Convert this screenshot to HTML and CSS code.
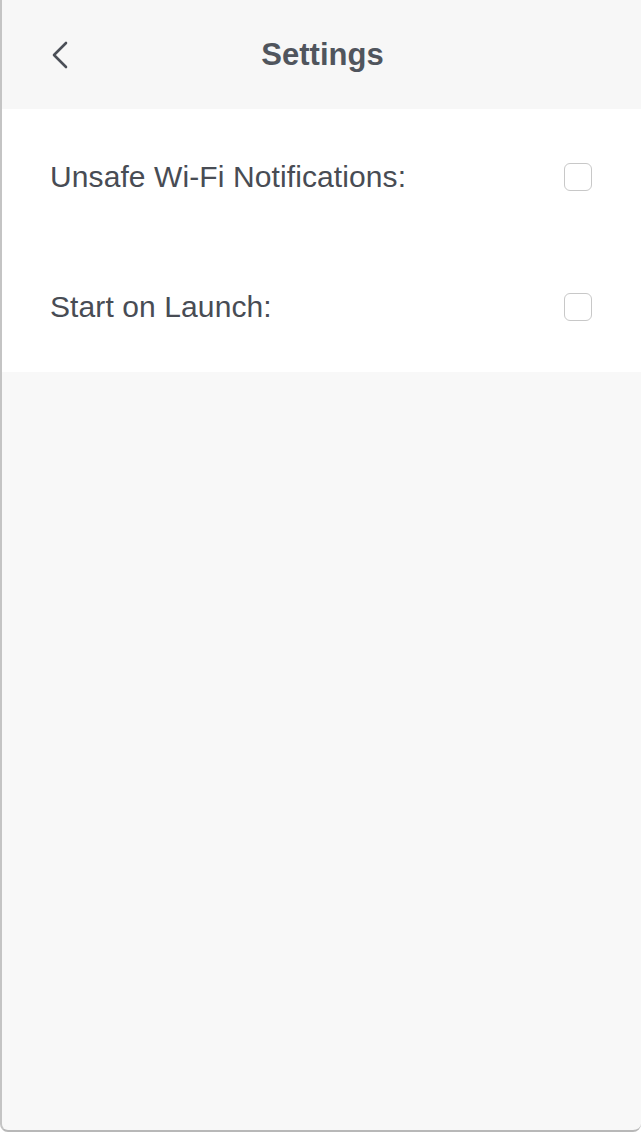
FILE: index.html
```html
<!DOCTYPE html>
<html lang="en">
<head>
    <meta charset="UTF-8">
    <title>Settings</title>
    <link rel="stylesheet" href="styles.css">
</head>
<body>
    <div class="window">
        <header class="top-bar">
            <button class="back-btn" aria-label="Back">
                <svg width="22" height="30" viewBox="0 0 22 30">
                    <path d="M17 3 L5 15 L17 27" fill="none" stroke="#4b4f57" stroke-width="2.6" stroke-linecap="round" stroke-linejoin="round"/>
                </svg>
            </button>
            <h1 class="title">Settings</h1>
        </header>

        <!-- Settings list -->
        <div class="settings-panel">
            <label class="setting-row">
                <span class="setting-label">Unsafe Wi-Fi Notifications:</span>
                <input type="checkbox" class="setting-check">
            </label>
            <label class="setting-row">
                <span class="setting-label">Start on Launch:</span>
                <input type="checkbox" class="setting-check">
            </label>
        </div>
    </div>
</body>
</html>
```

FILE: styles.css
```css
/* Reset the page */
body {
    margin: 0;
    background-color: #ffffff;
    font-family: "Liberation Sans", Arial, sans-serif;
    color: #484c54;
}

/* App window with a thin frame on the left and bottom */
.window {
    height: 1130px;
    background-color: #f8f8f8;
    border-left: 2px solid #c4c4c4;
    border-bottom: 2px solid #b8b8b8;
    border-bottom-left-radius: 8px;
    border-bottom-right-radius: 8px;
    display: flex;
    flex-direction: column;
    overflow: hidden;
}

/* Header bar */
.top-bar {
    height: 109px;
    background-color: #f7f7f7;
    display: flex;
    align-items: center;
    justify-content: center;
    position: relative;
}

.back-btn {
    position: absolute;
    left: 47px;
    top: 40px;
    padding: 0;
    border: none;
    background: none;
    cursor: pointer;
}

.title {
    margin: 0 0 0 2px;
    font-size: 31px;
    font-weight: bold;
    color: #50555d;
}

/* White block holding the options */
.settings-panel {
    background-color: #ffffff;
    padding-top: 3px;
}

.setting-row {
    height: 130px;
    display: flex;
    align-items: center;
    justify-content: space-between;
    padding: 0 49px 0 48px;
    cursor: pointer;
}

.setting-label {
    font-size: 30px;
    letter-spacing: 0.1px;
}

/* Custom rounded checkbox */
.setting-check {
    appearance: none;
    width: 28px;
    height: 28px;
    margin: 0;
    border: 1.5px solid #c8c8c8;
    border-radius: 6px;
    background-color: #ffffff;
    cursor: pointer;
}

.setting-check:checked {
    background-color: #4b4f57;
    border-color: #4b4f57;
}
```
